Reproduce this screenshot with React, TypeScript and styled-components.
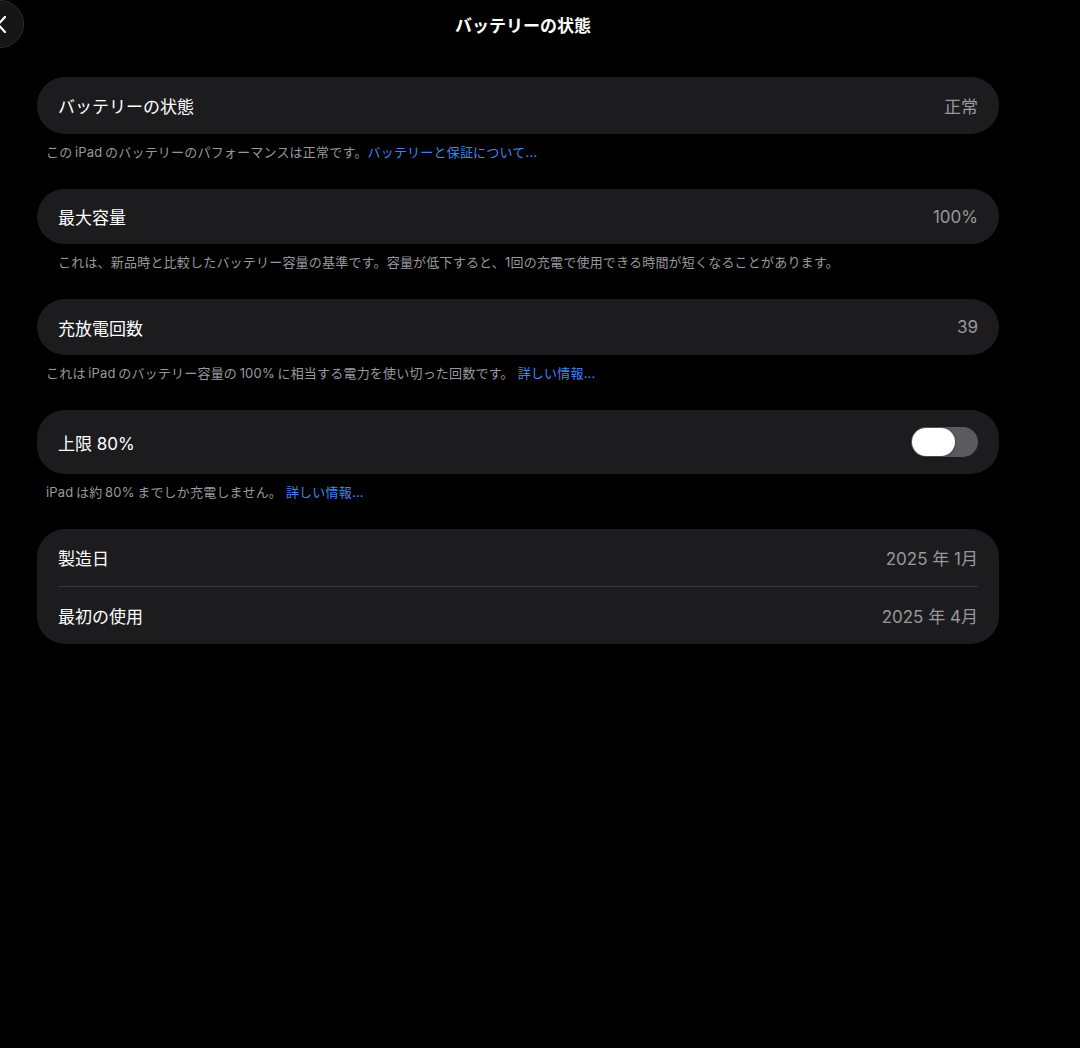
import React from "react";
import styled, { createGlobalStyle } from "styled-components";

const GlobalStyle = createGlobalStyle`
  html, body {
    margin: 0;
    padding: 0;
    background: #000;
  }
  body {
    font-family: "Inter", "Noto Sans CJK JP", sans-serif;
    color: #fff;
    -webkit-font-smoothing: antialiased;
  }
`;

const Page = styled.div`
  width: 1080px;
  min-height: 1048px;
  background: #000;
  overflow: hidden;
`;

const Header = styled.div`
  width: 1046px;
  height: 46px;
  display: grid;
  grid-template-columns: 100px 1fr 100px;
  align-items: center;
  margin-bottom: 31px;
`;

const BackButton = styled.button`
  width: 48px;
  height: 48px;
  margin-left: -24px;
  border-radius: 50%;
  border: 1px solid #2c2c2e;
  background: #151516;
  display: flex;
  align-items: center;
  justify-content: flex-end;
  padding: 0 17px 0 0;
  cursor: pointer;
`;

const Title = styled.h1`
  margin: 0;
  text-align: center;
  font-size: 17px;
  font-weight: 700;
  color: #fff;
`;

const Content = styled.div`
  width: 962px;
  margin-left: 37px;
  display: flex;
  flex-direction: column;
`;

const Card = styled.div`
  background: #1c1c1e;
  border-radius: 28px;
  padding: 0 21px;
  display: flex;
  flex-direction: column;
`;

const Row = styled.div<{ $height?: number }>`
  height: ${(p) => p.$height ?? 56}px;
  display: flex;
  align-items: center;
  justify-content: space-between;
  font-size: 17px;

  & + & {
    border-top: 1px solid #38383a;
  }
`;

const Label = styled.span`
  color: #fff;
`;

const Value = styled.span`
  color: #98989d;
`;

const Note = styled.p<{ $indent?: boolean }>`
  margin: 0;
  padding: 9px 0 0 ${(p) => (p.$indent ? 21 : 9)}px;
  height: 18px;
  line-height: 18px;
  margin-bottom: 28px;
  font-size: 13px;
  letter-spacing: 0.2px;
  color: #98989d;
`;

const Link = styled.a`
  color: #3f86f4;
  text-decoration: none;
  cursor: pointer;
`;

const Track = styled.div<{ $on: boolean }>`
  width: 67px;
  height: 30px;
  border-radius: 15px;
  background: ${(p) => (p.$on ? "#34c759" : "#5b5b5f")};
  display: flex;
  align-items: center;
  padding: 0 1px;
  box-sizing: border-box;
  justify-content: ${(p) => (p.$on ? "flex-end" : "flex-start")};
`;

const Knob = styled.div`
  width: 43px;
  height: 28px;
  border-radius: 14px;
  background: #fff;
  box-shadow: 0 1px 3px rgba(0, 0, 0, 0.3);
`;

const Toggle: React.FC<{ on: boolean }> = ({ on }) => (
  <Track $on={on}>
    <Knob />
  </Track>
);

export default function App() {
  return (
    <Page>
      <GlobalStyle />
      <Header>
        <BackButton aria-label="戻る">
          <svg width="9" height="17" viewBox="0 0 9 17" fill="none">
            <path
              d="M8 1L1 8.5L8 16"
              stroke="#fff"
              strokeWidth="2.2"
              strokeLinecap="round"
              strokeLinejoin="round"
            />
          </svg>
        </BackButton>
        <Title>バッテリーの状態</Title>
        <div />
      </Header>

      <Content>
        <Card>
          <Row $height={57}>
            <Label>バッテリーの状態</Label>
            <Value>正常</Value>
          </Row>
        </Card>
        <Note>
          この{"\u2009"}iPad{"\u2009"}のバッテリーのパフォーマンスは正常です。
          <Link>バッテリーと保証について...</Link>
        </Note>

        <Card>
          <Row $height={55}>
            <Label>最大容量</Label>
            <Value>100%</Value>
          </Row>
        </Card>
        <Note $indent>
          これは、新品時と比較したバッテリー容量の基準です。容量が低下すると、1回の充電で使用できる時間が短くなることがあります。
        </Note>

        <Card>
          <Row>
            <Label>充放電回数</Label>
            <Value>39</Value>
          </Row>
        </Card>
        <Note>
          これは{"\u2009"}iPad{"\u2009"}のバッテリー容量の{"\u2009"}100%{"\u2009"}に相当する電力を使い切った回数です。{" "}
          <Link>詳しい情報...</Link>
        </Note>

        <Card>
          <Row $height={64}>
            <Label>上限 80%</Label>
            <Toggle on={false} />
          </Row>
        </Card>
        <Note>
          iPad{"\u2009"}は約{"\u2009"}80%{"\u2009"}までしか充電しません。 <Link>詳しい情報...</Link>
        </Note>

        <Card>
          <Row $height={57}>
            <Label>製造日</Label>
            <Value>2025 年 1月</Value>
          </Row>
          <Row $height={57}>
            <Label>最初の使用</Label>
            <Value>2025 年 4月</Value>
          </Row>
        </Card>
      </Content>
    </Page>
  );
}
